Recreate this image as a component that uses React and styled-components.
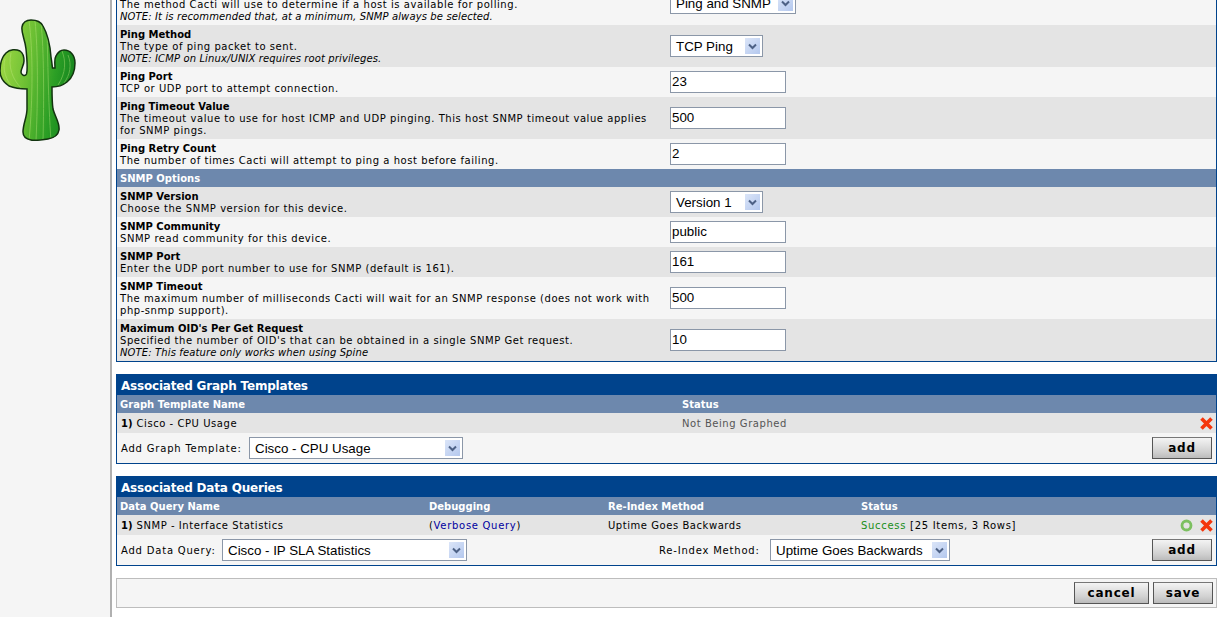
import React from 'react';
import styled, { createGlobalStyle } from 'styled-components';

const GlobalStyle = createGlobalStyle`
  html, body {
    margin: 0;
    padding: 0;
    height: 617px;
    overflow: hidden;
    background: #fff;
  }
  * {
    box-sizing: border-box;
  }
`;

const cactusOutline =
  'M22 8C23 3 27 1 31 1C37 1 41 3 43 7C47 14 50 24 51 38C52 44 52 46 52.5 49L55 49C55 44 54 40 56 37C58 33 61 31 64 31C70 31 75 36 75 44C75 52 72 59 67 63C62 67 56 68 52 68C52 78 52 84 53 90C55 98 60 104 59 111C58 117 54 119 48 120C42 121 36 122 31 121C26 120 23 117 23 113C23 105 27 98 27 90C27 82 27 75 27 70C20 70 14 69 9 67C3 63 0 58 0 52C0 44 2 38 6 34C10 30 16 30 20 32C23 34 24 38 24 42C24 46 21 50 21 53C21 56 25 58 26.5 55C28 50 27 40 26 30C25 20 21 14 22 8Z';

const Cactus = () => (
  <svg width="76" height="122" viewBox="0 0 76 122">
    <defs>
      <linearGradient id="cactusFill" x1="0" y1="0" x2="1" y2="0.25">
        <stop offset="0" stopColor="#a8dc48" />
        <stop offset="0.45" stopColor="#6cc034" />
        <stop offset="0.8" stopColor="#2c9f26" />
        <stop offset="1" stopColor="#1a8a20" />
      </linearGradient>
      <clipPath id="cactusClip">
        <path d={cactusOutline} />
      </clipPath>
    </defs>
    <path d={cactusOutline} fill="url(#cactusFill)" />
    <g clipPath="url(#cactusClip)" stroke="#c4ec84" strokeWidth="1" opacity="0.38" fill="none">
      <path d="M29 2C33 30 33 80 29 122" />
      <path d="M35 2C38 30 38 80 36 122" />
      <path d="M41 4C44 30 44 80 43 122" />
      <path d="M47 14C48 40 48 80 51 122" />
      <path d="M5 40C2 50 6 62 14 70" />
      <path d="M11 34C8 48 12 60 22 70" />
      <path d="M62 32C66 42 66 54 58 66" />
      <path d="M68 36C72 46 70 56 64 64" />
    </g>
    <path d={cactusOutline} fill="none" stroke="#12330f" strokeWidth="1.5" />
  </svg>
);

const Page = styled.div`
  display: flex;
  height: 617px;
  overflow: hidden;
  font-family: "DejaVu Sans", Verdana, sans-serif;
  font-size: 10px;
  color: #000;
`;

const Sidebar = styled.aside`
  flex: 0 0 112px;
  height: 617px;
  padding-top: 19px;
  background: #f5f5f5;
  border-right: 2px solid #b0b0b0;
`;

const Content = styled.main`
  flex: 1;
  display: flex;
  flex-direction: column;
  padding: 0 7px 0 4px;
`;

const FormTable = styled.section`
  display: flex;
  flex-direction: column;
  border-left: 1px solid #00438c;
  border-right: 1px solid #00438c;
  border-bottom: 1px solid #00438c;
  margin-bottom: 12px;
`;

const Row = styled.div`
  display: flex;
  height: ${(p) => p.$h}px;
  background: ${(p) => (p.$alt ? '#e4e4e4' : '#f5f5f5')};
  padding: 0 3px;
`;

const ClippedRow = styled(Row)`
  overflow: hidden;
  align-items: flex-end;
  padding-bottom: 2px;
`;

const Description = styled.div`
  flex: 0 0 550px;
  padding: 4px 12px 0 0;
  line-height: 12px;
  letter-spacing: 0.55px;
`;

const ClippedDescription = styled(Description)`
  padding-top: 0;
`;

const FieldName = styled.div`
  font-weight: bold;
  letter-spacing: 0;
`;

const Note = styled.div`
  font-style: italic;
  letter-spacing: 0.12px;
`;

const FieldCell = styled.div`
  display: flex;
  align-items: center;
`;

const ClippedFieldCell = styled(FieldCell)`
  align-self: flex-start;
  margin-top: ${(p) => p.$top}px;
`;

const TextInput = styled.input`
  width: 116px;
  height: 22px;
  padding: 0 1px 2px;
  border: 1px solid #8b97a8;
  background: #fff;
  font-family: "Liberation Sans", Arial, sans-serif;
  font-size: 13.33px;
  color: #000;
  outline: none;
`;

const SelectBox = styled.div`
  display: flex;
  align-items: center;
  justify-content: space-between;
  flex: 0 0 auto;
  width: ${(p) => p.$w}px;
  height: 22px;
  padding: 0 2px 0 5px;
  border: 1px solid #8b97a8;
  background: #fff;
  font-family: "Liberation Sans", Arial, sans-serif;
  font-size: 13.33px;
  color: #000;
  white-space: nowrap;
`;

const ArrowBox = styled.span`
  display: flex;
  align-items: center;
  justify-content: center;
  width: 15px;
  height: 16px;
  background: linear-gradient(135deg, #dbe5f8, #b4c8ee);
`;

const Select = ({ w, children }) => (
  <SelectBox $w={w}>
    {children}
    <ArrowBox>
      <svg width="9" height="7" viewBox="0 0 9 7">
        <path d="M1 1.5L4.5 5L8 1.5" fill="none" stroke="#4d6185" strokeWidth="2" />
      </svg>
    </ArrowBox>
  </SelectBox>
);

const SectionBar = styled.div`
  display: flex;
  align-items: center;
  height: 18px;
  padding: 0 3px;
  background: #6d88ad;
  color: #fff;
  font-weight: bold;
`;

const TitleBar = styled.div`
  display: flex;
  align-items: center;
  height: 21px;
  padding: 2px 4px 0;
  background: #00438c;
  color: #fff;
  font-size: 12px;
  font-weight: bold;
  letter-spacing: -0.2px;
`;

const ColumnBar = styled(SectionBar)`
  display: grid;
  grid-template-columns: ${(p) => p.$cols};
`;

const ListRow = styled.div`
  display: grid;
  grid-template-columns: ${(p) => p.$cols};
  align-items: center;
  height: 20px;
  padding: 0 3px;
  background: #e4e4e4;
  letter-spacing: 0.55px;
`;

const Index = styled.b`
  margin: 0 4px 0 1px;
  letter-spacing: 0;
`;

const Muted = styled.span`
  color: #555;
`;

const WideText = styled.span`
  letter-spacing: 0.7px;
`;

const QueryLink = styled.span`
  color: #0000a0;
`;

const SuccessText = styled.span`
  color: #198e19;
`;

const Actions = styled.div`
  display: flex;
  align-items: center;
  justify-content: flex-end;
  gap: 7px;
`;

const AddRow = styled.div`
  display: flex;
  align-items: center;
  height: 30px;
  padding: 0 4px;
  background: #f5f5f5;
`;

const AddLabel = styled.span`
  width: ${(p) => p.$w}px;
  margin-left: ${(p) => p.$gap || 0}px;
  flex: 0 0 auto;
  letter-spacing: 0.8px;
`;

const Spacer = styled.div`
  flex: 1;
`;

const Button = styled.button`
  width: ${(p) => p.$w}px;
  height: 22px;
  padding: 0;
  border: 1px solid #555;
  border-top-color: #777;
  background: linear-gradient(#f4f4f4, #d0d0d0 70%, #bbb);
  font-family: "DejaVu Sans", Verdana, sans-serif;
  font-size: 12px;
  font-weight: bold;
  letter-spacing: 0.8px;
  color: #000;
`;

const SaveBar = styled.div`
  display: flex;
  align-items: center;
  justify-content: flex-end;
  gap: 4px;
  height: 30px;
  padding: 0 3px 0 4px;
  background: #f5f5f5;
  border: 1px solid #bdbdbd;
`;

const DeleteIcon = () => (
  <svg width="13" height="13" viewBox="0 0 13 13">
    <path d="M1.5 1.5L11.5 11.5M11.5 1.5L1.5 11.5" stroke="#f4360c" strokeWidth="3.6" />
  </svg>
);

const ReloadIcon = () => (
  <svg width="13" height="13" viewBox="0 0 13 13">
    <circle cx="6.5" cy="6.5" r="4.5" fill="none" stroke="#7cc060" strokeWidth="2.8" />
  </svg>
);

const graphCols = '562px 1fr 20px';
const queryCols = '309px 179px 253px 1fr 40px';

const App = () => {
  return (
    <Page>
      <GlobalStyle />
      <Sidebar>
        <Cactus />
      </Sidebar>
      <Content>
        <FormTable>
          <ClippedRow $h={25}>
            <ClippedDescription>
              <div>The method Cacti will use to determine if a host is available for polling.</div>
              <Note>NOTE: It is recommended that, at a minimum, SNMP always be selected.</Note>
            </ClippedDescription>
            <ClippedFieldCell $top={-8}>
              <Select w={126}>Ping and SNMP</Select>
            </ClippedFieldCell>
          </ClippedRow>
          <Row $alt $h={42}>
            <Description>
              <FieldName>Ping Method</FieldName>
              <div>The type of ping packet to sent.</div>
              <Note>NOTE: ICMP on Linux/UNIX requires root privileges.</Note>
            </Description>
            <FieldCell><Select w={93}>TCP Ping</Select></FieldCell>
          </Row>
          <Row $h={30}>
            <Description>
              <FieldName>Ping Port</FieldName>
              <div>TCP or UDP port to attempt connection.</div>
            </Description>
            <FieldCell><TextInput defaultValue="23" /></FieldCell>
          </Row>
          <Row $alt $h={42}>
            <Description>
              <FieldName>Ping Timeout Value</FieldName>
              <div>The timeout value to use for host ICMP and UDP pinging. This host SNMP timeout value applies for SNMP pings.</div>
            </Description>
            <FieldCell><TextInput defaultValue="500" /></FieldCell>
          </Row>
          <Row $h={30}>
            <Description>
              <FieldName>Ping Retry Count</FieldName>
              <div>The number of times Cacti will attempt to ping a host before failing.</div>
            </Description>
            <FieldCell><TextInput defaultValue="2" /></FieldCell>
          </Row>
          <SectionBar>SNMP Options</SectionBar>
          <Row $alt $h={30}>
            <Description>
              <FieldName>SNMP Version</FieldName>
              <div>Choose the SNMP version for this device.</div>
            </Description>
            <FieldCell><Select w={93}>Version 1</Select></FieldCell>
          </Row>
          <Row $h={30}>
            <Description>
              <FieldName>SNMP Community</FieldName>
              <div>SNMP read community for this device.</div>
            </Description>
            <FieldCell><TextInput defaultValue="public" /></FieldCell>
          </Row>
          <Row $alt $h={30}>
            <Description>
              <FieldName>SNMP Port</FieldName>
              <div>Enter the UDP port number to use for SNMP (default is 161).</div>
            </Description>
            <FieldCell><TextInput defaultValue="161" /></FieldCell>
          </Row>
          <Row $h={42}>
            <Description>
              <FieldName>SNMP Timeout</FieldName>
              <div>The maximum number of milliseconds Cacti will wait for an SNMP response (does not work with php-snmp support).</div>
            </Description>
            <FieldCell><TextInput defaultValue="500" /></FieldCell>
          </Row>
          <Row $alt $h={42}>
            <Description>
              <FieldName>Maximum OID's Per Get Request</FieldName>
              <div>Specified the number of OID's that can be obtained in a single SNMP Get request.</div>
              <Note>NOTE: This feature only works when using Spine</Note>
            </Description>
            <FieldCell><TextInput defaultValue="10" /></FieldCell>
          </Row>
        </FormTable>

        <FormTable>
          <TitleBar>Associated Graph Templates</TitleBar>
          <ColumnBar $cols={graphCols}>
            <span>Graph Template Name</span>
            <span>Status</span>
          </ColumnBar>
          <ListRow $cols={graphCols}>
            <span><Index>1)</Index>Cisco - CPU Usage</span>
            <Muted>Not Being Graphed</Muted>
            <Actions><DeleteIcon /></Actions>
          </ListRow>
          <AddRow>
            <AddLabel $w={128}>Add Graph Template:</AddLabel>
            <Select w={214}>Cisco - CPU Usage</Select>
            <Spacer />
            <Button $w={60}>add</Button>
          </AddRow>
        </FormTable>

        <FormTable>
          <TitleBar>Associated Data Queries</TitleBar>
          <ColumnBar $cols={queryCols}>
            <span>Data Query Name</span>
            <span>Debugging</span>
            <span>Re-Index Method</span>
            <span>Status</span>
          </ColumnBar>
          <ListRow $cols={queryCols}>
            <span><Index>1)</Index>SNMP - Interface Statistics</span>
            <WideText>(<QueryLink>Verbose Query</QueryLink>)</WideText>
            <span>Uptime Goes Backwards</span>
            <WideText><SuccessText>Success</SuccessText> [25 Items, 3 Rows]</WideText>
            <Actions><ReloadIcon /><DeleteIcon /></Actions>
          </ListRow>
          <AddRow>
            <AddLabel $w={101}>Add Data Query:</AddLabel>
            <Select w={245}>Cisco - IP SLA Statistics</Select>
            <AddLabel $w={111} $gap={192}>Re-Index Method:</AddLabel>
            <Select w={180}>Uptime Goes Backwards</Select>
            <Spacer />
            <Button $w={60}>add</Button>
          </AddRow>
        </FormTable>

        <SaveBar>
          <Button $w={75}>cancel</Button>
          <Button $w={60}>save</Button>
        </SaveBar>
      </Content>
    </Page>
  );
};

export default App;
